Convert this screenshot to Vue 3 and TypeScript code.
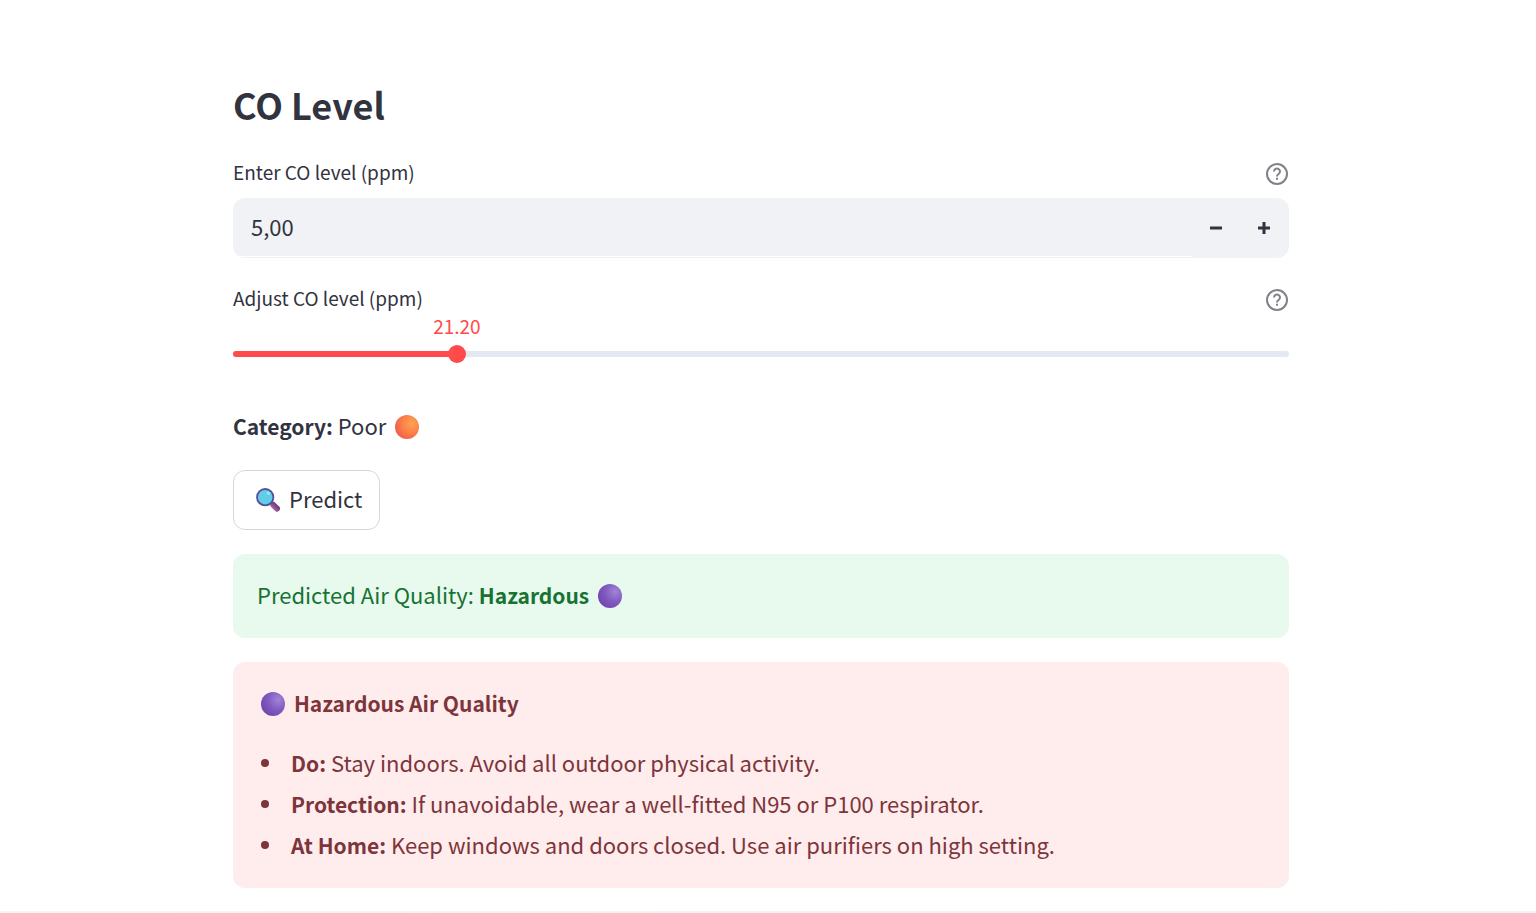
<script setup lang="ts">
import { computed, ref } from 'vue'

const level = ref('5,00')
const slider = ref(21.2)
const percent = computed(() => `${slider.value}%`)
const help = 'Carbon monoxide concentration'

const tips = [
  { title: 'Do:', text: 'Stay indoors. Avoid all outdoor physical activity.' },
  { title: 'Protection:', text: 'If unavoidable, wear a well-fitted N95 or P100 respirator.' },
  { title: 'At Home:', text: 'Keep windows and doors closed. Use air purifiers on high setting.' },
]

function step(delta: number) {
  const value = Math.max(0, Number(level.value.replace(',', '.')) + delta)
  level.value = value.toFixed(2).replace('.', ',')
}
</script>

<template>
  <div class="page">
    <svg class="defs" width="0" height="0" aria-hidden="true">
      <defs>
        <radialGradient id="orange" cx="0.7" cy="0.35" r="0.75">
          <stop offset="0" stop-color="#ffa352" />
          <stop offset="0.55" stop-color="#fb7f48" />
          <stop offset="1" stop-color="#f05c4c" />
        </radialGradient>
        <radialGradient id="purple" cx="0.72" cy="0.32" r="0.75">
          <stop offset="0" stop-color="#a284d6" />
          <stop offset="0.6" stop-color="#7e59be" />
          <stop offset="1" stop-color="#7546b4" />
        </radialGradient>
        <linearGradient id="handle" x1="1" y1="0" x2="0" y2="1">
          <stop offset="0" stop-color="#6c3b78" />
          <stop offset="1" stop-color="#a062a4" />
        </linearGradient>
        <symbol id="help" viewBox="0 0 24 24">
          <g fill="none" stroke="#808289" stroke-width="2">
            <circle cx="12" cy="12" r="10" />
            <path d="M9 9.5a3 3 0 1 1 4.6 2.5c-1 .7-1.6 1.2-1.6 2.5" />
            <path d="M12 15.8v2" />
          </g>
        </symbol>
      </defs>
    </svg>

    <main class="content">
      <h2>CO Level</h2>

      <div class="label-row">
        <label for="co-level">Enter CO level (ppm)</label>
        <button class="help" type="button" :aria-label="help"><svg><use href="#help" /></svg></button>
      </div>
      <div class="number">
        <input id="co-level" v-model="level" type="text" inputmode="decimal" />
        <button type="button" aria-label="Decrease" @click="step(-0.1)">
          <svg width="12" height="12" viewBox="0 0 12 12"><path d="M0 6h12" stroke="#31333f" stroke-width="3" /></svg>
        </button>
        <button type="button" aria-label="Increase" @click="step(0.1)">
          <svg width="12" height="12" viewBox="0 0 12 12"><path d="M0 6h12M6 0v12" stroke="#31333f" stroke-width="3" /></svg>
        </button>
      </div>

      <div class="label-row">
        <label for="co-slider">Adjust CO level (ppm)</label>
        <button class="help" type="button" :aria-label="help"><svg><use href="#help" /></svg></button>
      </div>
      <div class="slider">
        <div class="value-row">
          <span class="spacer" :style="{ width: percent }"></span>
          <output for="co-slider">{{ slider.toFixed(2) }}</output>
        </div>
        <div class="rail">
          <div class="track"><div class="fill" :style="{ width: percent }"></div></div>
          <input id="co-slider" v-model.number="slider" type="range" min="0" max="100" step="0.1" />
        </div>
      </div>

      <p class="category">
        <strong>Category:</strong> Poor
        <svg class="dot" viewBox="0 0 24 24" role="img" aria-label="Orange"><circle cx="12" cy="12" r="12" fill="url(#orange)" /></svg>
      </p>

      <button class="predict" type="button">
        <svg class="glass" viewBox="0 0 24 24" aria-hidden="true">
          <path d="M14.5 14.5l2.5 2.5" stroke="#50517e" stroke-width="2.5" />
          <path d="M17.3 17l3.7 3.7" stroke="url(#handle)" stroke-width="6" stroke-linecap="round" />
          <circle cx="9.2" cy="9.2" r="8.2" fill="#62cde9" stroke="#54509a" stroke-width="1.8" />
          <ellipse cx="12.4" cy="5.2" rx="2" ry="1.4" fill="#9ce4f5" transform="rotate(35 12.4 5.2)" />
        </svg>
        <span>Predict</span>
      </button>

      <section class="alert success" role="status">
        <p>
          Predicted Air Quality: <strong>Hazardous</strong>{{ ' ' }}
          <svg class="dot" viewBox="0 0 24 24" role="img" aria-label="Purple"><circle cx="12" cy="12" r="12" fill="url(#purple)" /></svg>
        </p>
      </section>

      <section class="alert danger" role="alert">
        <p>
          <svg class="dot lead" viewBox="0 0 24 24" role="img" aria-label="Purple"><circle cx="12" cy="12" r="12" fill="url(#purple)" /></svg>
          {{ ' ' }}<strong>Hazardous Air Quality</strong>
        </p>
        <ul>
          <li v-for="tip in tips" :key="tip.title">
            <span><strong>{{ tip.title }}</strong> {{ tip.text }}</span>
          </li>
        </ul>
      </section>
    </main>
    <div class="edge"></div>
  </div>
</template>

<style>
body {
  margin: 0;
  background: #fff;
}
</style>

<style scoped>
.page {
  display: flex;
  flex-direction: column;
  min-height: 100vh;
  box-sizing: border-box;
  color: #31333f;
  font-family: "Noto Sans CJK SC", "Noto Sans", sans-serif;
  font-size: 22px;
  line-height: 36px;
}
.defs {
  position: absolute;
}
.content {
  box-sizing: border-box;
  width: 100%;
  max-width: 1118px;
  margin: 0 auto;
  padding: 79px 38px 23px 24px;
}
.edge {
  height: 2px;
  margin-top: auto;
  background: linear-gradient(90deg, #faf5f0, #f5f0f6 50%, #edf3f8);
}
h2 {
  margin: 0 0 31px;
  font-size: 36px;
  font-weight: 600;
  line-height: 50px;
}
p {
  margin: 0;
}
strong {
  font-size: 21px;
  font-weight: 600;
  line-height: 1;
}
button {
  padding: 0;
  border: 0;
  background: none;
  color: inherit;
  font: inherit;
  cursor: pointer;
}
.label-row {
  display: flex;
  align-items: flex-end;
  justify-content: space-between;
  height: 26px;
  font-size: 19px;
  line-height: 28px;
}
.help {
  display: flex;
}
.help svg {
  width: 24px;
  height: 24px;
}
.number {
  display: flex;
  box-sizing: border-box;
  height: 60px;
  margin: 12px 0 28px;
  padding-right: 1px;
  border-radius: 12px;
  background: #f0f2f6;
  overflow: hidden;
}
.number input {
  flex: 1;
  min-width: 0;
  margin-bottom: 1px;
  padding: 0 18px 2px;
  border: 0;
  border-bottom: 1px solid #fff;
  outline: 0;
  background: none;
  color: inherit;
  font: inherit;
}
.number button {
  display: flex;
  align-items: center;
  justify-content: center;
  width: 48px;
}
.value-row {
  display: flex;
  height: 24px;
  margin: 2px 0 7px;
  color: #ff4b4b;
  font-size: 19px;
  line-height: 24px;
}
.spacer {
  flex: none;
}
output {
  display: flex;
  justify-content: center;
  width: 0;
}
.rail {
  display: grid;
  align-items: center;
  height: 18px;
}
.track,
.rail input {
  grid-area: 1 / 1;
}
.track {
  height: 6px;
  border-radius: 3px;
  background: #e4e8f0;
  overflow: hidden;
}
.fill {
  height: 100%;
  background: #ff4b4b;
}
.rail input {
  width: calc(100% + 18px);
  height: 18px;
  margin: 0 -9px;
  background: none;
  appearance: none;
}
.rail input::-webkit-slider-thumb {
  width: 18px;
  height: 18px;
  border-radius: 50%;
  background: #ff4b4b;
  appearance: none;
}
.category {
  margin: 44px 0 27px;
}
.dot {
  width: 24px;
  height: 24px;
  margin-left: 4px;
  vertical-align: -4px;
}
.predict {
  display: flex;
  align-items: center;
  gap: 9px;
  height: 60px;
  margin-bottom: 24px;
  padding: 0 17px 0 22px;
  border: 1px solid #d6d6d9;
  border-radius: 12px;
}
.predict span {
  padding-bottom: 4px;
}
.glass {
  width: 24px;
  height: 24px;
}
.alert {
  padding: 22px 24px 26px;
  border-radius: 12px;
}
.success {
  margin-bottom: 24px;
  background: #e8f9ee;
  color: #177233;
}
.danger {
  padding-bottom: 23px;
  background: #ffecec;
  color: #7d353b;
}
.lead {
  margin-right: 4px;
}
ul {
  margin: 22px 0 0;
  padding: 0 0 0 4px;
  list-style: none;
}
li {
  display: flex;
  align-items: baseline;
  gap: 22px;
  line-height: 41px;
}
li::before {
  flex: none;
  align-self: center;
  width: 8px;
  height: 8px;
  border-radius: 50%;
  background: currentColor;
  content: "";
}
</style>
